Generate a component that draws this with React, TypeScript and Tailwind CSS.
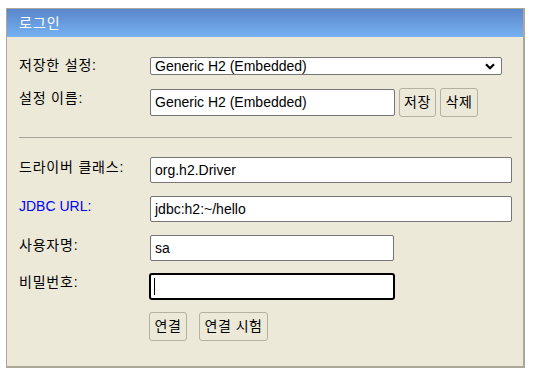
import React from "react";

const font = { fontFamily: '"Liberation Sans", Arial, "Noto Sans CJK KR", sans-serif' };

function Label({ children, blue }: { children: React.ReactNode; blue?: boolean }) {
  return (
    <div className={`w-[131px] shrink-0 text-[14px] leading-[18px] -mt-[1px] ${blue ? "text-[#0000ff]" : "text-black tracking-[0.8px]"}`}>
      {children}
    </div>
  );
}

function TextBox({ value, w, h = "h-[26px]" }: { value: string; w: string; h?: string }) {
  return (
    <div className={`${w} ${h} bg-white border border-[#767676] rounded-[2px] flex items-center pl-[4px] text-[14px] text-black`}>
      {value}
    </div>
  );
}

function Btn({ children, w }: { children: React.ReactNode; w: string }) {
  return (
    <div className={`${w} h-[29px] border border-[#b3b0a4] rounded-[3px] bg-[#ece9d8] flex items-center justify-center text-[14px] text-black tracking-[0.5px]`}>
      {children}
    </div>
  );
}

export default function App() {
  return (
    <div className="w-[535px] h-[377px] bg-white pt-[8px] pl-[6px]" style={font}>
      <div className="w-[519px] h-[360px] border-l border-t border-r-2 border-b-2 border-[#aca899] bg-[#ece9d8] flex flex-col">
        <div className="h-[28px] bg-gradient-to-b from-[#5a86ca] to-[#76b2f3] flex items-center pl-[12px] pt-[1px] text-white text-[14px] tracking-[1px]">
          로그인
        </div>
        <div className="flex flex-col pt-[20px] pl-[12px] pr-[11px]">
          <div className="flex items-start">
            <Label>저장한 설정:</Label>
            <div className="w-[352px] h-[18px] bg-white border border-[#767676] rounded-[2px] flex items-center justify-between pl-[4px] pr-[6px] text-[14px] text-black">
              <span>Generic H2 (Embedded)</span>
              <svg width="10" height="7" viewBox="0 0 10 7">
                <path d="M1 1.2 L5 5.2 L9 1.2" fill="none" stroke="#000" strokeWidth="2.2" />
              </svg>
            </div>
          </div>
          <div className="flex items-start mt-[13px]">
            <Label>
              <div className="mt-[2px]">설정 이름:</div>
            </Label>
            <div className="mt-[1px]">
              <TextBox value="Generic H2 (Embedded)" w="w-[245px]" h="h-[27px]" />
            </div>
            <div className="ml-[4px]">
              <Btn w="w-[37px]">저장</Btn>
            </div>
            <div className="ml-[4px]">
              <Btn w="w-[38px]">삭제</Btn>
            </div>
          </div>
          <div className="mt-[20px] h-px bg-[#a5a39a]" />
          <div className="flex items-start mt-[19px]">
            <Label>
              <div className="mt-[2px]">드라이버 클래스:</div>
            </Label>
            <TextBox value="org.h2.Driver" w="w-[362px]" />
          </div>
          <div className="flex items-start mt-[13px]">
            <Label blue>
              <div className="mt-[2px]">JDBC URL:</div>
            </Label>
            <TextBox value="jdbc:h2:~/hello" w="w-[362px]" />
          </div>
          <div className="flex items-start mt-[13px]">
            <Label>
              <div className="mt-[2px]">사용자명:</div>
            </Label>
            <TextBox value="sa" w="w-[244px]" />
          </div>
          <div className="flex items-start mt-[12px]">
            <Label>
              <div className="mt-[1px]">비밀번호:</div>
            </Label>
            <div className="-ml-px w-[246px] h-[27px] bg-white border-2 border-black rounded-[3px] flex items-center pl-[3px]">
              <div className="w-px h-[17px] bg-black" />
            </div>
          </div>
          <div className="flex items-start mt-[12px] pl-[130px]">
            <Btn w="w-[38px]">연결</Btn>
            <div className="ml-[12px]">
              <Btn w="w-[69px]">연결 시험</Btn>
            </div>
          </div>
        </div>
      </div>
    </div>
  );
}
